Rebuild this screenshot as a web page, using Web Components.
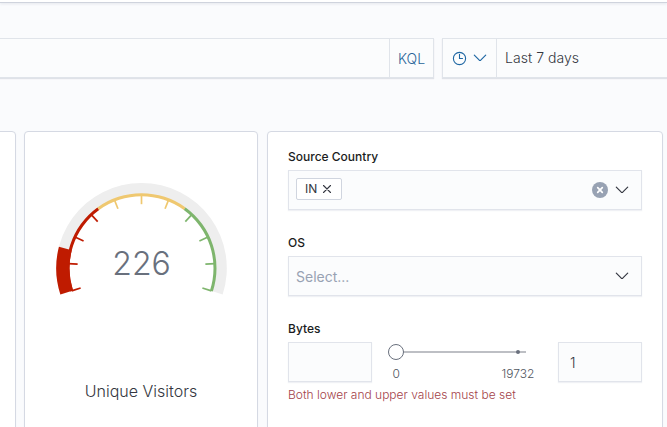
<!DOCTYPE html>
<html lang="en"><head><meta charset="utf-8"><title>Dashboard</title>
<style>body{margin:0;background:#fafbfd;overflow:hidden;font-family:Inter,"Liberation Sans",sans-serif;color:#343741}</style></head>
<body><dash-board></dash-board>
<script>
function define(name, html){
  const t=document.createElement('template');t.innerHTML=html;
  customElements.define(name,class extends HTMLElement{
    constructor(){super();this.attachShadow({mode:'open'}).append(t.content.cloneNode(true));}
  });
}
define('icon-chevron',`<style>:host{display:block;width:14px;height:14px}svg{display:block}</style>
<svg width="14" height="14" viewBox="0 0 14 14" fill="none" stroke="currentColor" stroke-width="1.2" stroke-linecap="round" stroke-linejoin="round"><path d="M1.3 4.2 6.3 9.2Q7 9.8 7.7 9.2L12.7 4.2"/></svg>`);
define('icon-clock',`<style>:host{display:block;width:14px;height:14px}svg{display:block;overflow:visible}</style>
<svg width="14" height="14" viewBox="0 0 14 14" fill="none" stroke="currentColor" stroke-width="1.1" stroke-linecap="round"><circle cx="7.5" cy="7.5" r="6.1"/><path d="M7.5 3.3V7.5H10.5"/></svg>`);
define('icon-cross',`<style>:host{display:block;width:10px;height:10px}svg{display:block}</style>
<svg width="10" height="10" viewBox="0 0 10 10" fill="none" stroke="currentColor" stroke-width="1.1" stroke-linecap="round"><path d="M1.5 1.5l7 7M8.5 1.5l-7 7"/></svg>`);
define('icon-clear',`<style>:host{display:block;width:16px;height:16px}svg{display:block}</style>
<svg width="16" height="16" viewBox="0 0 16 16"><circle cx="8" cy="8" r="8" fill="#98a2b3"/><path d="M5.7 5.7l4.6 4.6M10.3 5.7l-4.6 4.6" stroke="#fff" stroke-width="1.7" stroke-linecap="round"/></svg>`);
define('field-box',`<style>:host{display:flex;align-items:center;box-sizing:border-box;height:40px;background:#fbfcfd;border:1px solid #e1e4eb;box-shadow:0 1px 1px #d9dde666;font-size:14px}</style><slot></slot>`);
define('query-bar',`<style>
:host{display:flex;gap:8px;height:40px;font-size:14px}
field-box{border-color:#e0e4ea;box-shadow:0 1px 1px #dfe2e8}
.q{width:434px;border-left:0;justify-content:flex-end}
.lang{display:flex;box-sizing:border-box;width:44px;height:38px;align-items:center;padding-left:8px;border-left:1px solid #e0e4ea;color:#2a6599;font-weight:360}
.time{flex:1;margin-right:-4px}
.btn{display:flex;box-sizing:border-box;width:54px;height:38px;gap:7px;align-items:center;padding-left:9px;border-right:1px solid #e0e4ea;color:#1f67a3}
.val{padding:0 0 1px 8px;font-weight:360;letter-spacing:.04px}
</style><field-box class="q"><span class="lang">KQL</span></field-box><field-box class="time"><span class="btn"><icon-clock></icon-clock><icon-chevron></icon-chevron></span><span class="val">Last 7 days</span></field-box>`);
define('dash-panel',`<style>:host{display:block;box-sizing:border-box;background:#fff;border:1px solid #d5d9e3;border-radius:4px;box-shadow:0 1px 2px #d3dae633}</style><slot></slot>`);
customElements.define('goal-gauge',class extends HTMLElement{
  constructor(){
    super();
    const s=this.attachShadow({mode:'open'});
    const cx=85.5,cy=85.2;
    // Angle is measured in degrees clockwise from the left horizontal.
    const p=(r,a)=>{const t=a*Math.PI/180;return (cx-r*Math.cos(t)).toFixed(2)+' '+(cy-r*Math.sin(t)).toFixed(2);};
    const band=(r1,r2,a,b,c)=>{const l=b-a>180?1:0;return `<path fill="${c}" d="M${p(r2,a)}A${r2} ${r2} 0 ${l} 1 ${p(r2,b)}L${p(r1,b)}A${r1} ${r1} 0 ${l} 0 ${p(r1,a)}Z"/>`;};
    const red='#bf1b00',yel='#efc870',grn='#7eb56d';
    let g=band(73,85.3,-18,198,'#eee')+band(72,75,-18,54,red)+band(72,75,54,126,yel)+band(72,75,126,198,grn)+band(72,85.3,-18,14.5,red);
    for(let i=0;i<=10;i++){const a=-18+i*21.6;g+=`<path stroke="${a<54?red:a<126?yel:grn}" stroke-width="1.7" d="M${p(73.5,a)}L${p(64,a)}"/>`;}
    s.innerHTML=`<style>:host{display:flex;flex-direction:column;align-items:center;padding-top:51px;height:244px}svg{display:block;overflow:visible}
    text{font-size:32px;font-weight:360;fill:#69707d;text-anchor:middle}
    .label{font-size:16px;font-weight:320;line-height:24px;margin-top:81px}</style>
    <svg width="171" height="115">${g}<text x="85.5" y="92">226</text></svg><div class="label">Unique Visitors</div>`;
  }
});
define('form-row',`<style>:host{display:block}::slotted([slot=label]){display:block;height:18px;line-height:18px;margin-bottom:4px;font-size:12px;font-weight:550;color:#1a1c21}</style><slot name="label"></slot><slot></slot>`);
define('option-pill',`<style>:host{display:flex;box-sizing:border-box;align-items:center;gap:5px;height:22px;width:46px;padding:0 0 1px 8px;border:1px solid #d0d5df;border-radius:2px;background:#fff;font-size:12px;font-weight:380;margin-top:-2px}</style><slot></slot><icon-cross></icon-cross>`);
define('range-track',`<style>:host{display:block;width:154px;height:40px;margin-left:-8px}svg{display:block}text{font-size:12px;font-weight:360;fill:#505560;text-anchor:middle}</style>
<svg width="154" height="40"><path d="M12 10H142" stroke="#bdbfc4" stroke-width="2"/><circle cx="134" cy="10" r="2" fill="#69707d"/><circle cx="12" cy="10" r="7.5" fill="#fff" stroke="#69707d"/><text x="12.3" y="36">0</text><text x="134" y="36">19732</text></svg>`);
define('control-form',`<style>
:host{display:flex;flex-direction:column;gap:24px;padding:16px 20px}
.combo{padding:0 12px 0 7px;gap:7px}.grow{flex:1}.ph{color:#98a2b3;font-weight:380}
.range{display:flex;justify-content:space-between}.num{width:84px;padding-left:11px;font-weight:360}
.err{margin-top:4px;font-size:12px;line-height:18px;color:#a33f49;font-weight:360}
</style>
<form-row><span slot="label">Source Country</span><field-box class="combo"><option-pill>IN</option-pill><span class="grow"></span><icon-clear></icon-clear><icon-chevron></icon-chevron></field-box></form-row>
<form-row><span slot="label">OS</span><field-box class="combo"><span class="grow ph">Select...</span><icon-chevron></icon-chevron></field-box></form-row>
<form-row><span slot="label">Bytes</span><div class="range"><field-box class="num"></field-box><range-track></range-track><field-box class="num">1</field-box></div><div class="err">Both lower and upper values must be set</div></form-row>`);
define('dash-board',`<style>
:host{display:flex;flex-direction:column;height:427px;overflow:hidden}
header{flex:none;box-sizing:border-box;height:3px;background:#fff;border-bottom:1px solid #cfd3dd;box-shadow:0 1px 3px #c5cbd866}
query-bar{flex:none;margin-top:35px}
main{flex:none;display:grid;grid-template-columns:20px 234px 396px;gap:9px;margin:53px 0 0 -5px;height:310px}
.edge{margin-right:-1px}
</style><header></header><query-bar></query-bar><main><dash-panel class="edge"></dash-panel><dash-panel><goal-gauge></goal-gauge></dash-panel><dash-panel><control-form></control-form></dash-panel></main>`);
</script></body></html>
